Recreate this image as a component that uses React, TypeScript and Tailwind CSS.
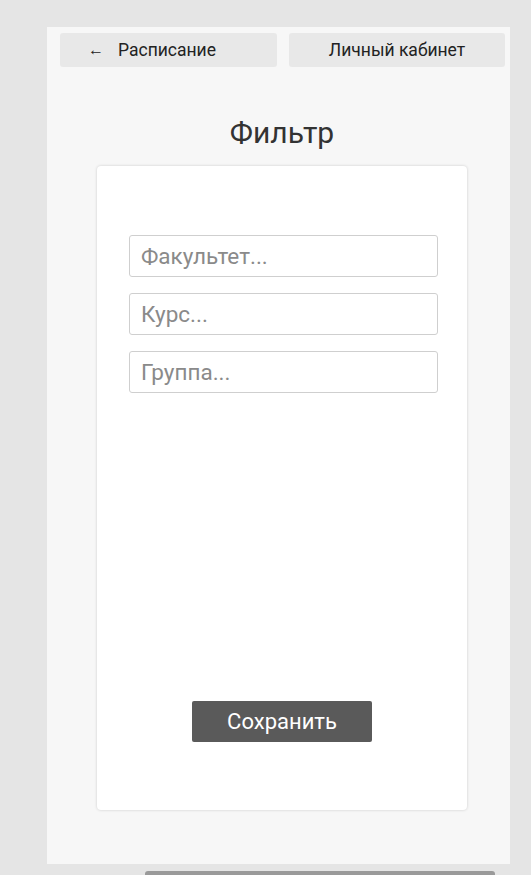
import * as React from "react"

const fields = ["Факультет...", "Курс...", "Группа..."]

const App = () => {
    return (
        <div className="relative h-[875px] w-[531px] overflow-hidden bg-[#e5e5e5] pt-[27px] pl-[47px] font-['Roboto',sans-serif]">
            <div className="flex h-[837px] w-[463px] flex-col bg-[#f7f7f7]">
                <div className="flex gap-[12px] pt-[6px] pl-[13px] pr-[5px]">
                    <button className="flex h-[34px] w-[217px] items-center rounded-[3px] bg-[#e8e8e8] pl-[28px] text-[17.5px] text-[#222]">
                        <span className="mr-[14px] text-[16px]">←</span>
                        Расписание
                    </button>
                    <button className="flex h-[34px] w-[216px] items-center justify-center rounded-[3px] bg-[#e8e8e8] text-[17.5px] text-[#222]">
                        Личный кабинет
                    </button>
                </div>

                <h1 className="mt-[48px] ml-[50px] w-[370px] text-center text-[30px] leading-[36px] text-[#333]">Фильтр</h1>

                <div className="mt-[15px] ml-[50px] flex h-[644px] w-[370px] flex-col rounded-[4px] bg-white pt-[69px] shadow-[0_0_3px_rgba(0,0,0,0.18)]">
                    <div className="flex flex-col gap-[16px] pl-[32px]">
                        {fields.map((f) => (
                            <input
                                key={f}
                                type="text"
                                placeholder={f}
                                className="h-[42px] w-[309px] rounded-[3px] border border-[#cfcfcf] px-[11px] text-[22.5px] text-[#333] placeholder-[#8a8a8a] outline-none"
                            />
                        ))}
                    </div>
                    <div className="mt-auto mb-[68px] flex justify-center">
                        <button className="h-[41px] w-[180px] rounded-[2px] bg-[#5a5a5a] text-[22px] text-white">
                            Сохранить
                        </button>
                    </div>
                </div>
            </div>
            <div className="absolute bottom-0 left-[145px] h-[4px] w-[350px] rounded-t-[3px] bg-[#9a9a9a]" />
        </div>
    )
}

export default App
